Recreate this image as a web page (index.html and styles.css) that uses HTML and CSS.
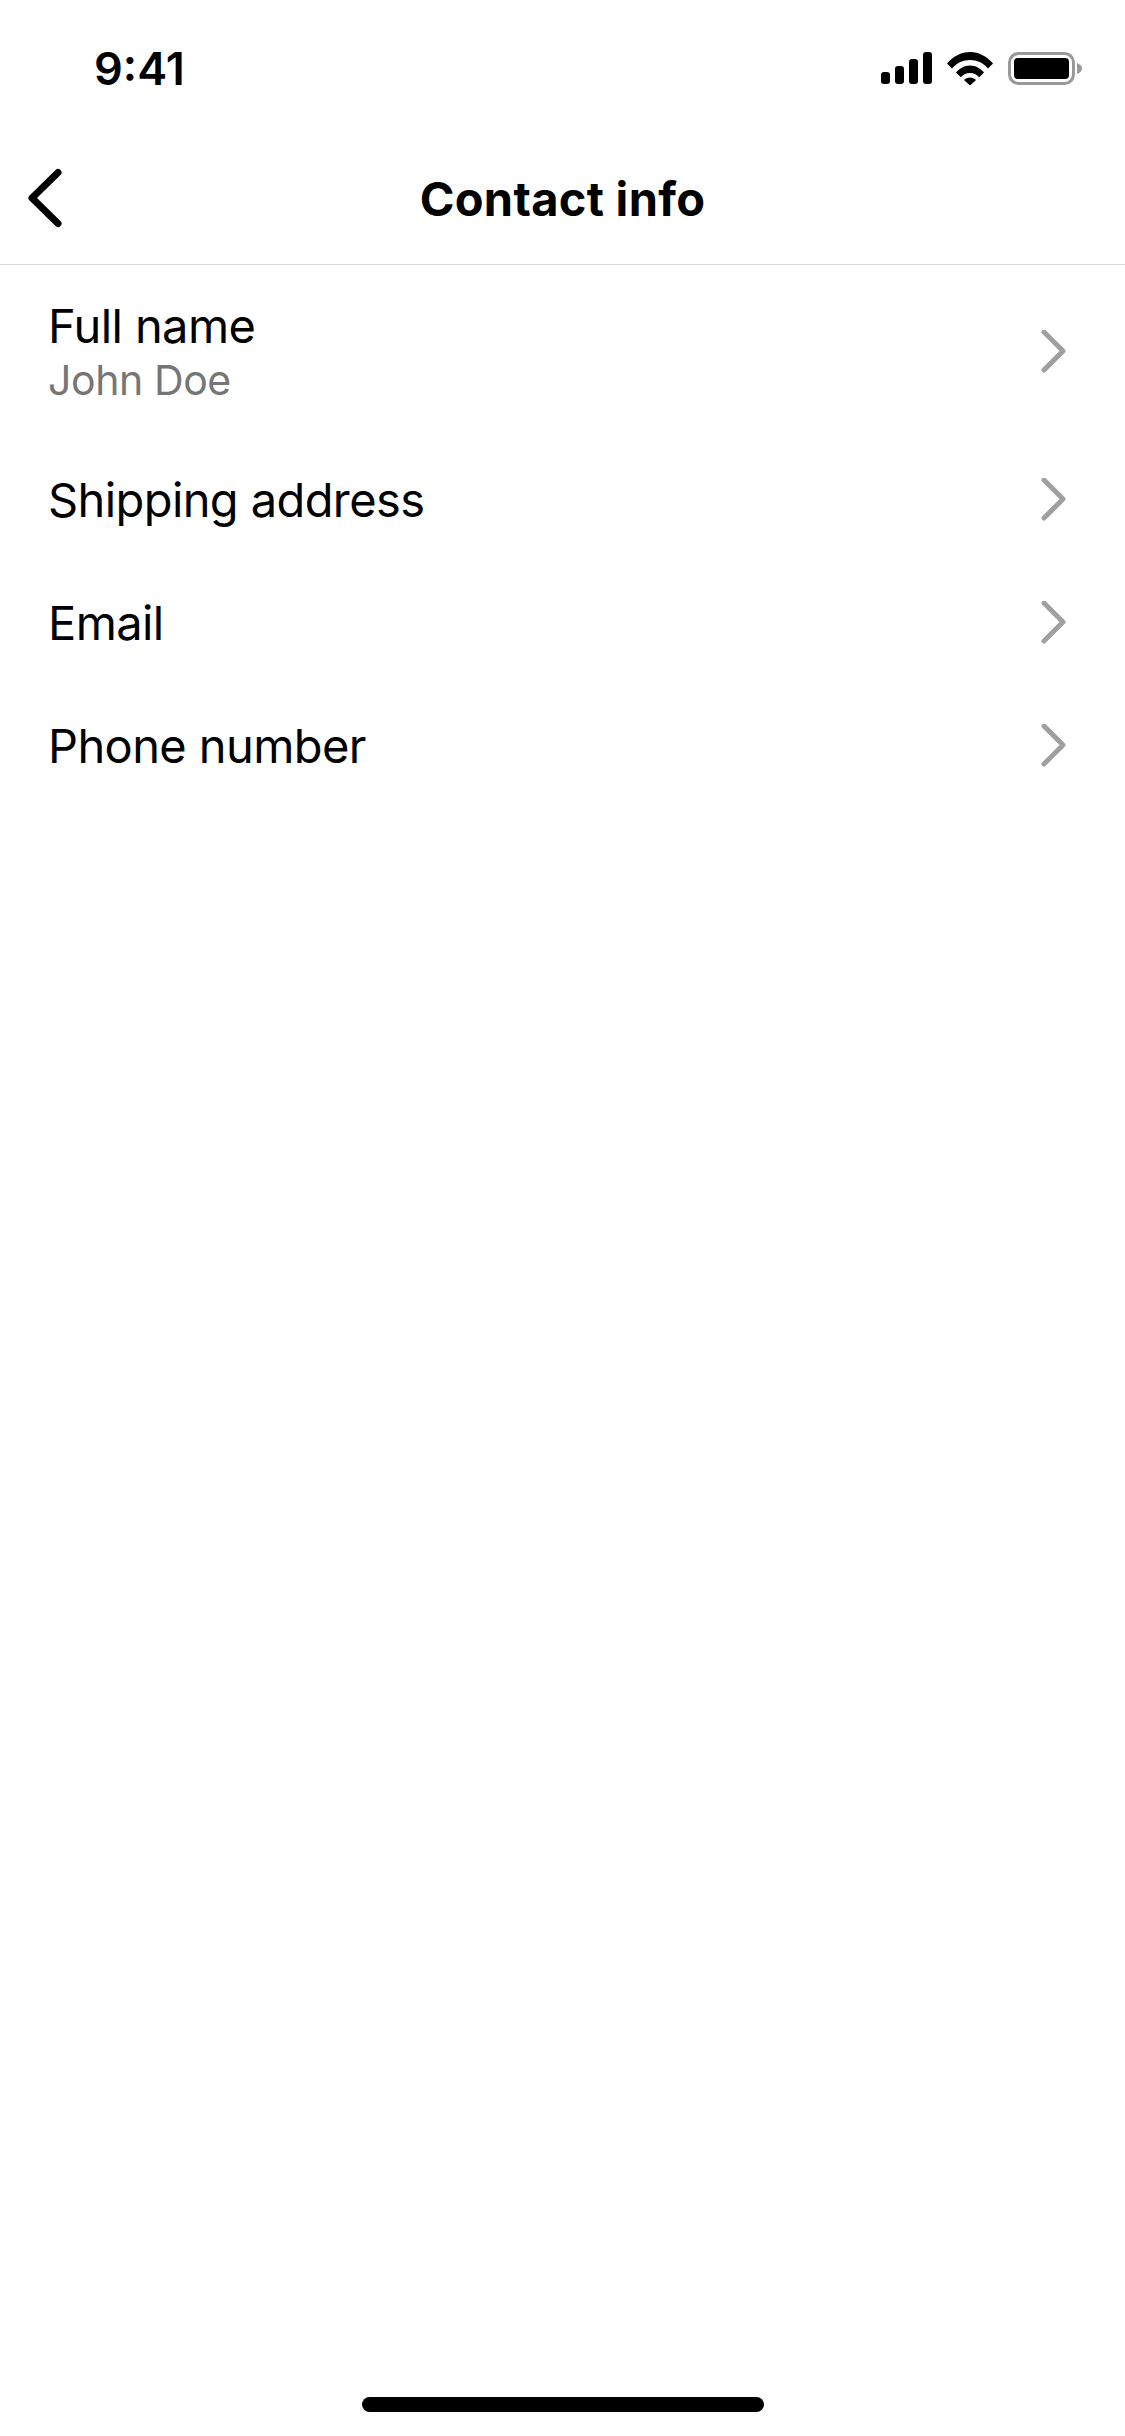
FILE: index.html
```html
<!DOCTYPE html>
<html lang="en">
<head>
    <meta charset="UTF-8">
    <meta name="viewport" content="width=device-width, initial-scale=1.0">
    <title>Contact info</title>
    <link rel="stylesheet" href="styles.css">
</head>
<body>
    <div class="phone">
        <div class="status-bar">
            <span class="status-time">9:41</span>
            <div class="status-icons">
                <svg class="icon-signal" width="51" height="32" viewBox="0 0 51 32">
                    <rect x="0" y="20" width="9" height="12" rx="3"/>
                    <rect x="14" y="14" width="9" height="18" rx="3"/>
                    <rect x="28" y="7" width="9" height="25" rx="3"/>
                    <rect x="42" y="0" width="9" height="32" rx="3"/>
                </svg>
                <svg class="icon-wifi" width="46" height="33" viewBox="0 0 46 33">
                    <path d="M0 11.500C6 4.500 14 0 23 0s17 4.500 23 11.500l-5 5C36 10.800 30 8 23 8S10 10.800 5 16.500z"/>
                    <path d="M9 20.500C12.500 16.300 17.500 13.500 23 13.500s10.500 2.800 14 7l-4.800 4.800C29.800 22.500 26.700 21 23 21s-6.800 1.500-9.200 4.300z"/>
                    <path d="M17 28c1.500-1.600 3.600-2.500 6-2.500s4.500 0.900 6 2.500L23 33.500z"/>
                </svg>
                <svg class="icon-battery" width="74" height="33" viewBox="0 0 74 33">
                    <rect x="1.500" y="1.500" width="64" height="30" rx="9" fill="none" stroke="#999" stroke-width="3"/>
                    <rect x="6" y="6" width="55" height="21" rx="4"/>
                    <path d="M69 11c3 1 5 3 5 5.500s-2 4.500-5 5.500z" fill="#999"/>
                </svg>
            </div>
        </div>

        <div class="nav-bar">
            <button class="back-btn" aria-label="Back">
                <svg width="36" height="60" viewBox="0 0 36 60">
                    <path d="M32 4.500 L6 30 L32 55.500" fill="none" stroke="#000" stroke-width="7" stroke-linecap="round" stroke-linejoin="round"/>
                </svg>
            </button>
            <h1 class="nav-title">Contact info</h1>
        </div>

        <ul class="contact-list">
            <li class="contact-row contact-row-tall">
                <div class="contact-text">
                    <span class="contact-label">Full name</span>
                    <span class="contact-value">John Doe</span>
                </div>
                <svg class="chevron" width="26" height="44" viewBox="0 0 26 44"><path d="M3 2 L22 21 L3 40"/></svg>
            </li>
            <li class="contact-row">
                <div class="contact-text">
                    <span class="contact-label">Shipping address</span>
                </div>
                <svg class="chevron" width="26" height="44" viewBox="0 0 26 44"><path d="M3 2 L22 21 L3 40"/></svg>
            </li>
            <li class="contact-row">
                <div class="contact-text">
                    <span class="contact-label">Email</span>
                </div>
                <svg class="chevron" width="26" height="44" viewBox="0 0 26 44"><path d="M3 2 L22 21 L3 40"/></svg>
            </li>
            <li class="contact-row">
                <div class="contact-text">
                    <span class="contact-label">Phone number</span>
                </div>
                <svg class="chevron" width="26" height="44" viewBox="0 0 26 44"><path d="M3 2 L22 21 L3 40"/></svg>
            </li>
        </ul>

        <div class="home-area">
            <div class="home-bar"></div>
        </div>
    </div>
</body>
</html>
```

FILE: styles.css
```css
:root {
    --text-color: #000;
    --muted-color: #767676;
    --chevron-color: #a0a0a0;
    --border-color: #dbdbdb;
}

body {
    font-family: Inter, "Liberation Sans", sans-serif;
    margin: 0;
    background-color: #fff;
    color: var(--text-color);
}

.phone {
    display: flex;
    flex-direction: column;
    height: 2436px;
}

.status-bar {
    display: flex;
    align-items: center;
    justify-content: space-between;
    height: 132px;
    padding: 4px 43px 0 94px;
    box-sizing: border-box;
}

.status-time {
    font-size: 45px;
    font-weight: 600;
}

.status-icons {
    display: flex;
    align-items: center;
    gap: 15px;
}

.nav-bar {
    position: relative;
    display: flex;
    align-items: center;
    justify-content: center;
    height: 133px;
    box-sizing: border-box;
    border-bottom: 1px solid var(--border-color);
}

.back-btn {
    position: absolute;
    left: 26px;
    top: 36px;
    padding: 0;
    border: none;
    background: none;
    line-height: 0;
}

.nav-title {
    margin: 0;
    font-size: 47px;
    font-weight: 700;
    letter-spacing: 0.3px;
}

.contact-list {
    list-style-type: none;
    margin: 0;
    padding: 0;
}

.contact-row {
    display: flex;
    align-items: center;
    justify-content: space-between;
    height: 123px;
    padding: 0 58px 0 48px;
}

.contact-row-tall {
    height: 173px;
}

.contact-text {
    display: flex;
    flex-direction: column;
}

.contact-label {
    font-size: 47px;
    line-height: 56px;
    letter-spacing: -0.6px;
}

.contact-value {
    font-size: 41px;
    line-height: 52px;
    letter-spacing: -0.4px;
    color: var(--muted-color);
}

.chevron path {
    fill: none;
    stroke: var(--chevron-color);
    stroke-width: 5;
    stroke-linecap: round;
    stroke-linejoin: round;
}

.home-area {
    margin-top: auto;
    display: flex;
    justify-content: center;
    padding-bottom: 24px;
}

.home-bar {
    width: 402px;
    height: 15px;
    border-radius: 8px;
    background-color: #000;
}
```
